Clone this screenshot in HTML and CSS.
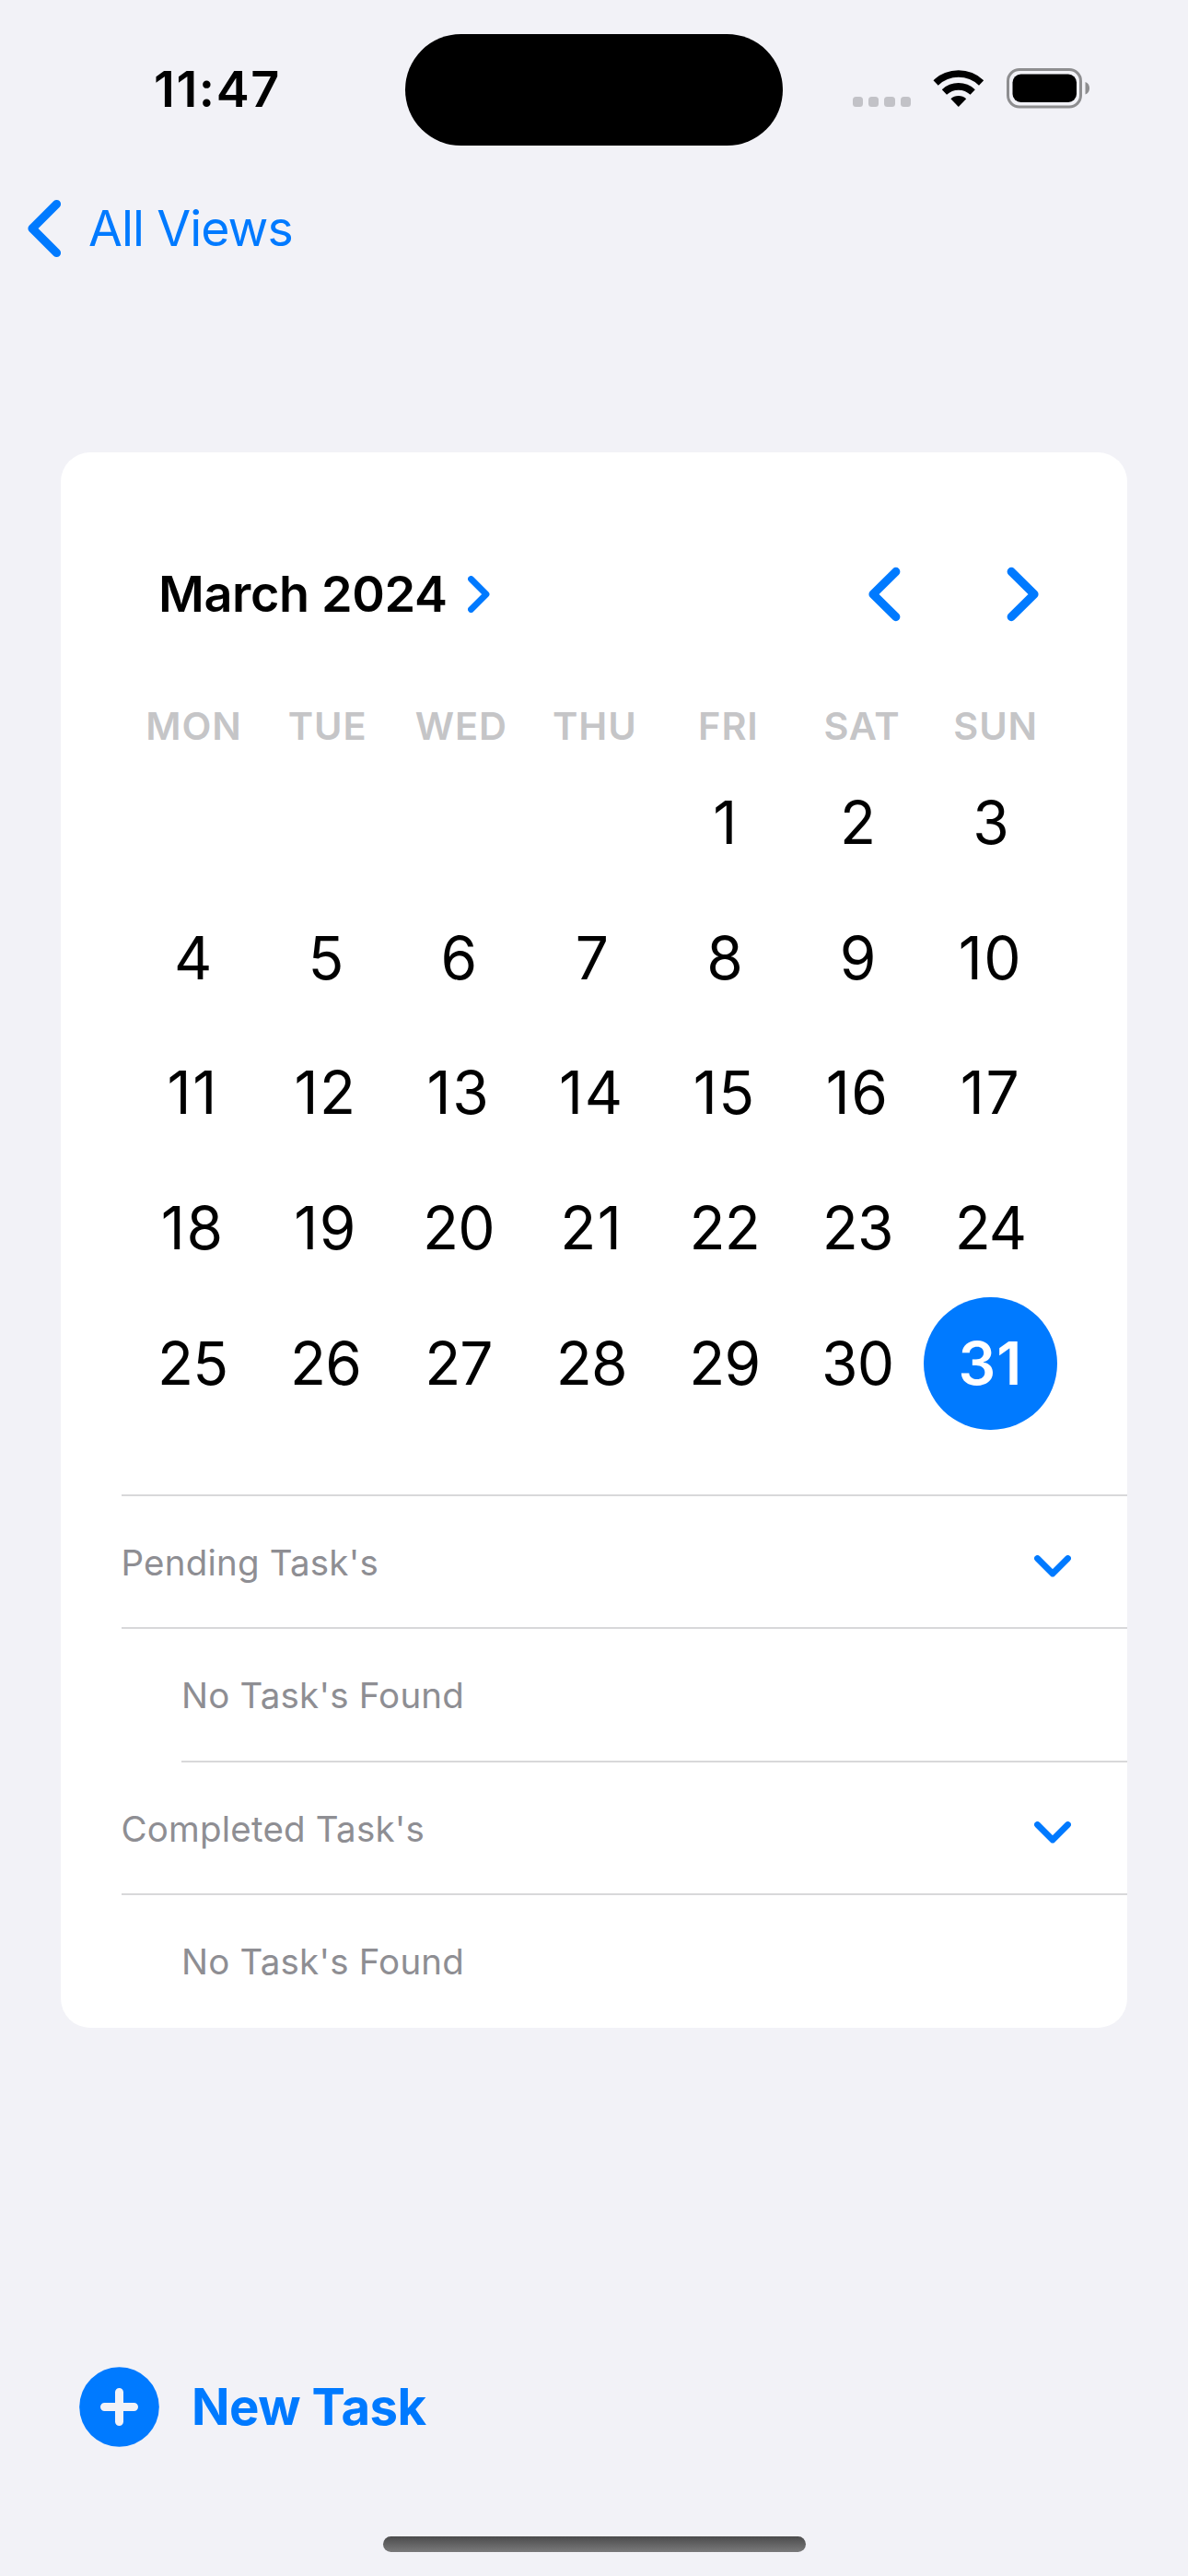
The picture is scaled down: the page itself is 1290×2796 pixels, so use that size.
FILE: index.html
```
<!DOCTYPE html>
<html lang="en">
<head>
<meta charset="utf-8">
<title>Calendar Tasks</title>
<link rel="stylesheet" href="styles.css">
</head>
<body>
<div class="screen">
  <header class="status">
    <div class="time">11:47</div>
    <div class="island"></div>
    <div class="indicators">
      <div class="dots"><i></i><i></i><i></i><i></i></div>
      <svg class="wifi" width="56" height="42" viewBox="0 0 56 42">
        <path d="M0.5 12.2A39.5 39.5 0 0 1 55.2 12.2L50 17.7A32 32 0 0 0 5.7 17.7Z"/>
        <path d="M9.8 22.2A26 26 0 0 1 45.8 22.2L40.6 27.8A18.5 18.5 0 0 0 15 27.8Z"/>
        <path d="M19.4 32.3A12.5 12.5 0 0 1 36.2 32.3L27.8 41Z"/>
      </svg>
      <svg class="battery" width="91" height="44" viewBox="0 0 91 44">
        <rect x="1.5" y="1.5" width="79" height="40.5" rx="12.5" fill="none" stroke="#8e8e90" stroke-width="3"/>
        <rect x="6.5" y="6.5" width="69.5" height="30.5" rx="9" fill="#000"/>
        <path d="M85.5 15a7.3 7.3 0 0 1 0 13.5Z" fill="#8e8e90"/>
      </svg>
    </div>
  </header>

  <nav class="nav">
    <svg width="37" height="62" viewBox="0 0 37 62"><path class="line thick" d="M31.5 4.6L5 31L31.5 57.4"/></svg>
    <span class="back">All Views</span>
  </nav>

  <main class="card">
    <div class="month">
      <span class="month-name">March 2024</span>
      <svg class="month-more" width="24" height="40" viewBox="0 0 24 40"><path class="line thin" d="M3.5 3.5L20 20L3.5 36.5"/></svg>
      <svg class="prev" width="35" height="60" viewBox="0 0 35 60"><path class="line thick" d="M29.8 5.4L5 30L29.8 54.6"/></svg>
      <svg class="next" width="35" height="60" viewBox="0 0 35 60"><path class="line thick" d="M5.2 5.4L30 30L5.2 54.6"/></svg>
    </div>
    <div class="weekdays">
      <span>MON</span><span>TUE</span><span>WED</span><span>THU</span><span>FRI</span><span>SAT</span><span>SUN</span>
    </div>
    <div class="days">
      <span class="first">1</span><span>2</span><span>3</span>
      <span>4</span><span>5</span><span>6</span><span>7</span><span>8</span><span>9</span><span class="loose">10</span>
      <span class="loose">11</span><span class="loose">12</span><span class="loose">13</span><span class="loose">14</span><span class="loose">15</span><span class="loose">16</span><span class="loose">17</span>
      <span class="loose">18</span><span class="loose">19</span><span>20</span><span class="loose">21</span><span>22</span><span>23</span><span>24</span>
      <span>25</span><span>26</span><span>27</span><span>28</span><span>29</span><span>30</span><span class="today">31</span>
    </div>
    <div class="tasks">
      <div class="row">
        <span>Pending Task's</span>
        <svg class="toggle" width="40" height="24" viewBox="0 0 40 24"><path class="line thin" d="M3.5 3.5L20 20L36.5 3.5"/></svg>
      </div>
      <div class="row"><span class="empty">No Task's Found</span></div>
      <div class="row inset">
        <span>Completed Task's</span>
        <svg class="toggle" width="40" height="24" viewBox="0 0 40 24"><path class="line thin" d="M3.5 3.5L20 20L36.5 3.5"/></svg>
      </div>
      <div class="row"><span class="empty">No Task's Found</span></div>
    </div>
  </main>

  <footer class="footer">
    <div class="new-task">
      <svg width="87" height="87" viewBox="0 0 87 87">
        <circle cx="43.5" cy="43.5" r="43.3" fill="#007aff"/>
        <path d="M27.5 43.5H59.5M43.5 27.5V59.5" stroke="#f2f2f7" stroke-width="9" stroke-linecap="round"/>
      </svg>
      <span>New Task</span>
    </div>
    <div class="home-bar"></div>
  </footer>
</div>
</body>
</html>
```
FILE: styles.css
```
body {
  margin: 0;
  background: #f2f2f7;
  font-family: Inter, "Liberation Sans", sans-serif;
  color: #000;
}

svg {
  display: block;
  flex: none;
}

.screen {
  width: 1290px;
  height: 2796px;
  display: flex;
  flex-direction: column;
  overflow: hidden;
}

.line {
  fill: none;
  stroke: #007aff;
  stroke-linecap: round;
  stroke-linejoin: round;
}

.thick { stroke-width: 9.2; }
.thin { stroke-width: 6.8; }

/* Status bar */
.status {
  height: 194px;
  display: grid;
  grid-template-columns: 440px 410px 440px;
  align-items: center;
}

.time {
  padding-left: 167px;
  padding-bottom: 1px;
  font-size: 54px;
  font-weight: 600;
  letter-spacing: 1.6px;
  line-height: 64px;
}

.island {
  height: 121px;
  border-radius: 61px;
  background: #000;
}

.indicators {
  display: flex;
  align-items: flex-end;
  padding: 0 0 2px 75.5px;
}

.dots {
  display: flex;
  gap: 6.1px;
  margin: 0 24px 2px 0;
}

.dots i {
  width: 11.4px;
  height: 11.4px;
  border-radius: 3.5px;
  background: #c2c2c7;
}

.wifi { margin: 0 24px 1px 0; }

/* Navigation bar */
.nav {
  height: 108px;
  display: flex;
  align-items: center;
  padding-left: 30px;
}

.back {
  margin-left: 29px;
  padding-bottom: 1px;
  color: #007aff;
  font-size: 53.5px;
  letter-spacing: -0.91px;
}

/* Calendar card */
.card {
  margin: 189px 66px 0;
  height: 1710px;
  box-sizing: border-box;
  padding-top: 113px;
  border-radius: 32px;
  background: #fff;
}

.month {
  height: 81px;
  display: flex;
  align-items: center;
  padding: 0 96px 0 106px;
}

.month-name {
  padding-bottom: 1px;
  font-size: 54px;
  font-weight: 600;
  letter-spacing: -0.36px;
}

.month-more { margin-left: 22px; }
.prev { margin-left: auto; }
.next { margin-left: 115px; }

.weekdays {
  margin: 73px 0 0 72px;
  height: 60px;
  display: grid;
  grid-template-columns: repeat(7, 145.1px);
  align-items: center;
  text-align: center;
  color: #c5c5c7;
  font-size: 41.5px;
  font-weight: 560;
  letter-spacing: 0.9px;
}

.days {
  margin: 2px 0 0 71px;
  display: grid;
  grid-template-columns: repeat(7, 144.4px);
  grid-auto-rows: 146.67px;
  align-items: center;
  text-align: center;
  font-size: 64px;
  letter-spacing: -0.8px;
}

.days span { line-height: 143px; padding-bottom: 1.4px; }
.days .first { grid-column: 5; }
.days .loose { letter-spacing: 1.6px; }

.days .today {
  border-radius: 50%;
  background: #007aff;
  color: #fff;
  font-weight: 600;
  letter-spacing: 1.2px;
}

/* Task sections */
.tasks {
  margin: 68.5px 0 0 65.5px;
  color: #8e8e93;
  font-size: 38.5px;
  letter-spacing: 0.2px;
}

.row {
  height: 144.5px;
  box-sizing: border-box;
  display: flex;
  align-items: center;
  justify-content: space-between;
  padding: 1px 61px 0 0;
  border-top: 2px solid #d8d8da;
}

.empty { margin-left: 65.5px; }
.toggle { margin-top: 8px; }

/* The rule above this row starts at the nested indent */
.inset {
  border-top-color: transparent;
  background: linear-gradient(#d8d8da, #d8d8da) 65.5px 0 / 100% 2px no-repeat border-box;
}

/* Footer */
.footer {
  flex: 1;
  display: flex;
  flex-direction: column;
  justify-content: space-between;
  padding: 368px 0 26px;
}

.new-task {
  display: flex;
  align-items: center;
  padding-left: 86px;
  color: #007aff;
  font-size: 54.5px;
  font-weight: 660;
  letter-spacing: -0.5px;
}

.new-task span {
  margin-left: 35px;
  padding-bottom: 1px;
}

.home-bar {
  align-self: center;
  width: 459px;
  height: 17px;
  border-radius: 9px;
  background: linear-gradient(#4b4b4c, #7a7a7b);
}
```
